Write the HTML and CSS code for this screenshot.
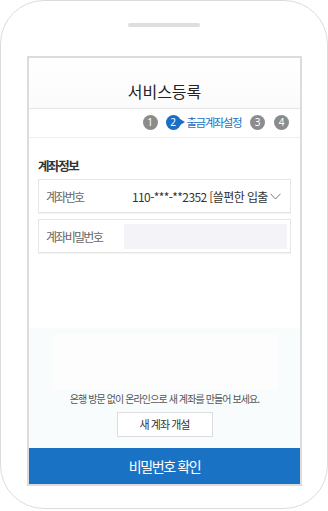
FILE: index.html
```html
<!DOCTYPE html>
<html lang="ko">
<head>
<meta charset="utf-8">
<link rel="stylesheet" href="styles.css">
</head>
<body>
<div class="phone">
  <div class="speaker"></div>
  <div class="screen">
    <div class="title">서비스등록</div>
    <div class="steps">
      <span class="step">1</span>
      <span class="step active">2</span>
      <span class="step-label">출금계좌설정</span>
      <span class="step">3</span>
      <span class="step">4</span>
    </div>
    <div class="content">
      <div class="section-title">계좌정보</div>
      <div class="field">
        <span class="label">계좌번호</span>
        <span class="value">110-***-**2352 [쓸편한 입출</span>
        <svg class="chev" width="11" height="7" viewBox="0 0 11 7"><path d="M0.5 0.8 L5.5 6 L10.5 0.8" fill="none" stroke="#777" stroke-width="1"/></svg>
      </div>
      <div class="field pw">
        <span class="label">계좌비밀번호</span>
        <span class="input"></span>
      </div>
    </div>
    <div class="promo">
      <div class="promo-inner"></div>
      <div class="promo-text">은행 방문 없이 온라인으로 새 계좌를 만들어 보세요.</div>
      <div class="promo-btn">새 계좌 개설</div>
    </div>
    <div class="confirm">비밀번호 확인</div>
  </div>
</div>
</body>
</html>
```

FILE: styles.css
```css
* { box-sizing: border-box; }
html, body { margin: 0; padding: 0; background: #fff; }
body { font-family: "Noto Sans CJK KR", "Noto Sans", sans-serif; }
.phone {
  width: 328px;
  height: 509px;
  border: 1px solid #dcdcdc;
  border-radius: 44px;
  padding-top: 22px;
  display: flex;
  flex-direction: column;
  align-items: center;
}
.speaker {
  width: 72px;
  height: 4px;
  border-radius: 2px;
  background: #dedede;
}
.screen {
  margin-top: 29px;
  margin-left: 1px;
  width: 275px;
  height: 430px;
  border: 2px solid #dcdcdc;
  display: flex;
  flex-direction: column;
  background: #fff;
}
.title {
  height: 51px;
  padding-top: 20px;
  text-align: center;
  font-size: 16px;
  line-height: 26px;
  color: #222;
  border-bottom: 1px solid #e6e6e6;
  background: linear-gradient(#fff, #fbfbfb);
}
.steps {
  height: 29px;
  display: flex;
  align-items: center;
  justify-content: flex-end;
  padding-right: 11px;
  padding-bottom: 2px;
  border-bottom: 1px solid #eeeeee;
}
.step {
  width: 15px;
  height: 15px;
  border-radius: 50%;
  background: #8c8c8c;
  color: #fff;
  font-size: 10px;
  line-height: 15px;
  text-align: center;
  margin-left: 9px;
  font-family: "Noto Sans", sans-serif;
}
.step.active {
  background: #1a6fc4;
  position: relative;
  margin-left: 8px;
}
.step.active::after {
  content: "";
  position: absolute;
  right: -4px;
  top: 4px;
  border-left: 5px solid #1a6fc4;
  border-top: 3.5px solid transparent;
  border-bottom: 3.5px solid transparent;
}
.step-label {
  color: #1a6fc4;
  font-size: 11.5px;
  margin-left: 6px;
  letter-spacing: -1.5px;
}
.content {
  padding: 19px 9px 0 9px;
}
.section-title {
  font-size: 12.5px;
  font-weight: bold;
  color: #333;
  line-height: 18px;
  margin-bottom: 4px;
  letter-spacing: -1.4px;
}
.field {
  height: 34px;
  border: 1px solid #e6e6e6;
  display: flex;
  align-items: center;
  padding-left: 7px;
  padding-right: 9px;
  margin-bottom: 6px;
  box-shadow: 0 1px 0 #f3f3f3;
}
.label {
  font-size: 12px;
  color: #666;
  width: 86px;
  flex: none;
  letter-spacing: -1.7px;
}
.value {
  font-size: 12px;
  color: #333;
  white-space: nowrap;
  overflow: hidden;
  flex: 1;
  letter-spacing: -0.6px;
}
.chev { flex: none; margin-left: 2px; }
.field.pw { padding-right: 3px; }
.field.pw .label { width: 78px; }
.input {
  flex: 1;
  height: 25px;
  background: #f3f3f8;
}
.promo {
  margin-top: auto;
  height: 120px;
  background: #f8fcfd;
  display: flex;
  flex-direction: column;
  align-items: center;
  padding-top: 6px;
}
.promo-inner {
  width: 226px;
  height: 56px;
  background: #fdfdfe;
}
.promo-text {
  font-size: 10px;
  color: #555;
  margin-top: 1px;
  line-height: 16px;
  letter-spacing: -0.9px;
}
.promo-btn {
  margin-top: 5px;
  width: 96px;
  height: 25px;
  border: 1px solid #dddddd;
  background: #fff;
  font-size: 11px;
  color: #333;
  text-align: center;
  line-height: 23px;
  letter-spacing: -1px;
}
.confirm {
  height: 36px;
  background: #1a72c5;
  color: #fff;
  font-size: 14px;
  text-align: center;
  line-height: 36px;
  letter-spacing: -1.4px;
}
```
